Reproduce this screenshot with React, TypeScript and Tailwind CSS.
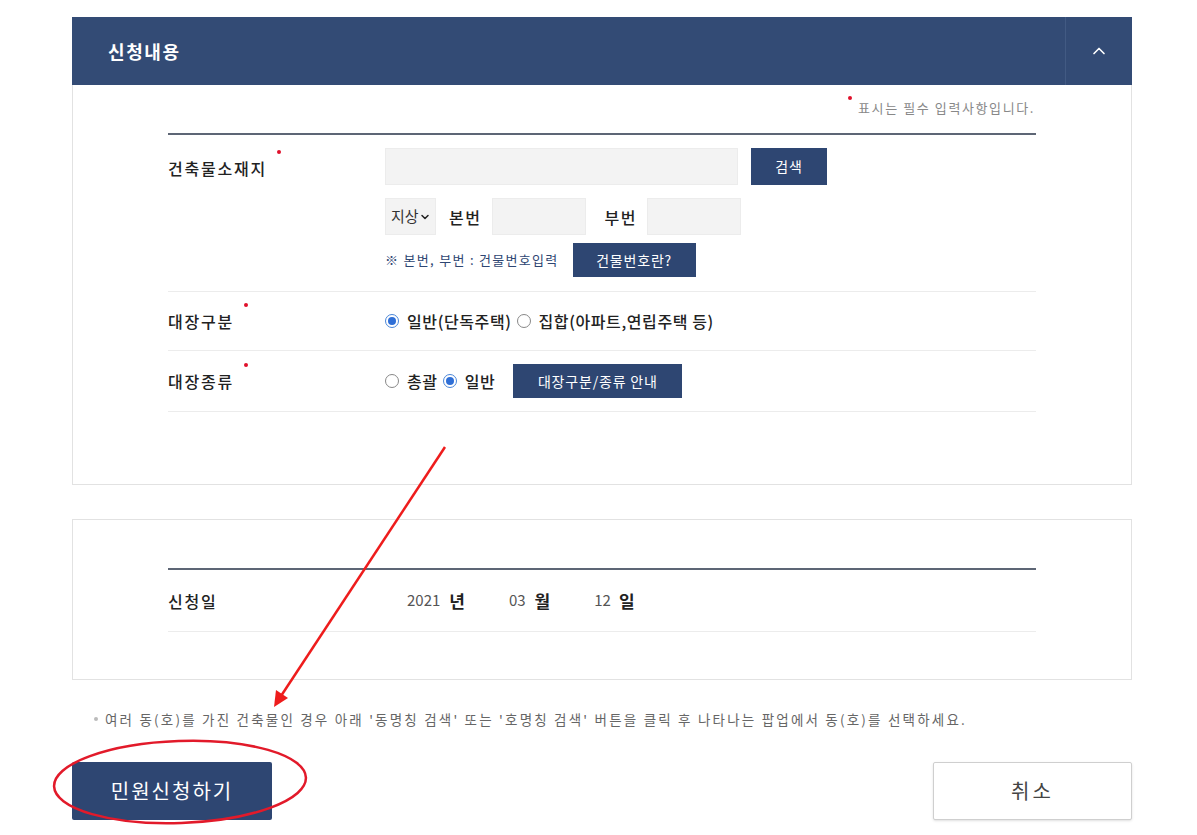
import { ChevronUp, ChevronDown } from "lucide-react";

const font = { fontFamily: '"Noto Sans CJK KR", "Noto Sans", sans-serif' };

function Req() {
  return <span className="absolute -right-[14px] -top-[6px] w-[4px] h-[4px] rounded-full bg-[#e0102b]" />;
}

function Label({ children, req = true }: { children: React.ReactNode; req?: boolean }) {
  return (
    <div className="w-[217px] shrink-0 text-[16px] tracking-[1.8px] font-medium text-[#222]">
      <span className="relative">
        {children}
        {req && <Req />}
      </span>
    </div>
  );
}

function Radio({ checked, label }: { checked?: boolean; label: string }) {
  return (
    <span className="inline-flex items-center gap-[8px]">
      {checked ? (
        <span className="w-[14px] h-[14px] rounded-full border border-[#4a86d8] bg-white flex items-center justify-center">
          <span className="w-[8px] h-[8px] rounded-full bg-[#2f6fd6]" />
        </span>
      ) : (
        <span className="w-[14px] h-[14px] rounded-full border border-[#888] bg-white" />
      )}
      <span className="text-[16px] tracking-[0.6px] font-medium text-[#222]">{label}</span>
    </span>
  );
}

function NavyButton({ children, className = "" }: { children: React.ReactNode; className?: string }) {
  return (
    <button className={`bg-[#2e4672] text-white text-[14px] tracking-[0.8px] flex items-center justify-center ${className}`}>
      {children}
    </button>
  );
}

export default function App() {
  return (
    <div className="relative w-[1197px] h-[835px] bg-white overflow-hidden" style={font}>
      <div className="pl-[72px] pt-[17px] w-[1132px]">
        {/* 신청내용 패널 */}
        <div className="border border-[#e2e2e2]">
          <div className="h-[68px] bg-[#334b75] flex items-center justify-between -m-px">
            <span className="pl-[36px] text-[18px] tracking-[1.6px] font-bold text-white">신청내용</span>
            <div className="h-full w-[67px] border-l border-[#425a83] flex items-center justify-center">
              <ChevronUp className="w-[20px] h-[20px] text-white" strokeWidth={2} />
            </div>
          </div>
          <div className="px-[95px] pt-[14px] pb-[72px]">
            <div className="flex justify-end pr-[1px] h-[35px]">
              <span className="relative text-[13px] tracking-[1.6px] text-[#888] pl-[10px]">
                <span className="absolute left-[0px] top-[-2px] w-[4px] h-[4px] rounded-full bg-[#e0102b]" />
                표시는 필수 입력사항입니다.
              </span>
            </div>
            <div className="border-t-2 border-[#5d6675]">
              {/* 건축물소재지 */}
              <div className="flex pt-[13px] pb-[14px] border-b border-[#ececec]">
                <div className="pt-[8px]">
                  <Label>건축물소재지</Label>
                </div>
                <div className="flex flex-col">
                  <div className="flex items-center gap-[13px]">
                    <div className="w-[353px] h-[37px] bg-[#f3f3f3] border border-[#ececec]" />
                    <NavyButton className="w-[76px] h-[37px]">검색</NavyButton>
                  </div>
                  <div className="flex items-center mt-[13px] h-[37px]">
                    <div className="w-[51px] h-[37px] bg-[#f3f3f3] border border-[#ececec] flex items-center pl-[5px] text-[15px] text-[#333]">
                      지상
                      <ChevronDown className="w-[12px] h-[12px] text-[#222]" strokeWidth={3} />
                    </div>
                    <span className="ml-[13px] text-[16px] tracking-[1.5px] font-medium text-[#222]">본번</span>
                    <div className="ml-[11px] w-[94px] h-[37px] bg-[#f3f3f3] border border-[#ececec]" />
                    <span className="ml-[18px] text-[16px] tracking-[1.5px] font-medium text-[#222]">부번</span>
                    <div className="ml-[10px] w-[94px] h-[37px] bg-[#f3f3f3] border border-[#ececec]" />
                  </div>
                  <div className="flex items-center mt-[8px]">
                    <span className="text-[13px] tracking-[1.3px] text-[#2e4672]">※ 본번, 부번 : 건물번호입력</span>
                    <NavyButton className="ml-[14px] w-[123px] h-[34px]">건물번호란?</NavyButton>
                  </div>
                </div>
              </div>
              {/* 대장구분 */}
              <div className="flex items-center h-[59px] border-b border-[#ececec]">
                <Label>대장구분</Label>
                <div className="flex items-center gap-[5px]">
                  <Radio checked label="일반(단독주택)" />
                  <Radio label="집합(아파트,연립주택 등)" />
                </div>
              </div>
              {/* 대장종류 */}
              <div className="flex items-center h-[61px] border-b border-[#ececec]">
                <Label>대장종류</Label>
                <div className="flex items-center gap-[5px]">
                  <Radio label="총괄" />
                  <Radio checked label="일반" />
                  <NavyButton className="ml-[13px] w-[169px] h-[34px]">대장구분/종류 안내</NavyButton>
                </div>
              </div>
            </div>
          </div>
        </div>

        {/* 신청일 패널 */}
        <div className="mt-[34px] border border-[#e2e2e2] px-[95px] pt-[48px] pb-[47px]">
          <div className="border-t-2 border-[#5d6675]">
            <div className="flex items-center h-[62px] border-b border-[#ececec]">
              <div className="w-[239px] shrink-0 text-[16px] tracking-[1.8px] font-medium text-[#222]">신청일</div>
              <div className="flex items-center text-[15px]">
                <span className="text-[#555]">2021</span>
                <span className="ml-[9px] text-[17px] font-bold text-[#222]">년</span>
                <span className="ml-[44px] text-[#555]">03</span>
                <span className="ml-[9px] text-[17px] font-bold text-[#222]">월</span>
                <span className="ml-[44px] text-[#555]">12</span>
                <span className="ml-[8px] text-[17px] font-bold text-[#222]">일</span>
              </div>
            </div>
          </div>
        </div>

        {/* 안내 문구 */}
        <div className="mt-[29px] pl-[22px] text-[13.5px] tracking-[2.2px] text-[#666] flex items-center whitespace-nowrap">
          <span className="w-[4px] h-[4px] rounded-full bg-[#bbb] mr-[7px]" />
          여러 동(호)를 가진 건축물인 경우 아래 '동명칭 검색' 또는 '호명칭 검색' 버튼을 클릭 후 나타나는 팝업에서 동(호)를 선택하세요.
        </div>

        {/* 버튼 */}
        <div className="mt-[33px] flex justify-between">
          <button className="w-[200px] h-[58px] bg-[#2e4672] text-white text-[20px] tracking-[2px] rounded-[2px]">민원신청하기</button>
          <button className="w-[199px] h-[58px] bg-white border border-[#cfcfcf] text-[#444] text-[20px] tracking-[3px] rounded-[2px] shadow-sm">
            취소
          </button>
        </div>
      </div>

      {/* 주석 (빨간 화살표, 타원) */}
      <svg className="absolute inset-0 pointer-events-none" width="1197" height="835">
        <line x1="445" y1="447" x2="281" y2="696" stroke="#ee1c1c" strokeWidth="2.5" />
        <polygon points="274,707 276,690 288,698" fill="#ee1c1c" />
        <ellipse cx="180" cy="782" rx="126" ry="41" fill="none" stroke="#e21a2a" strokeWidth="2.5" transform="rotate(-2 180 782)" />
      </svg>
    </div>
  );
}
